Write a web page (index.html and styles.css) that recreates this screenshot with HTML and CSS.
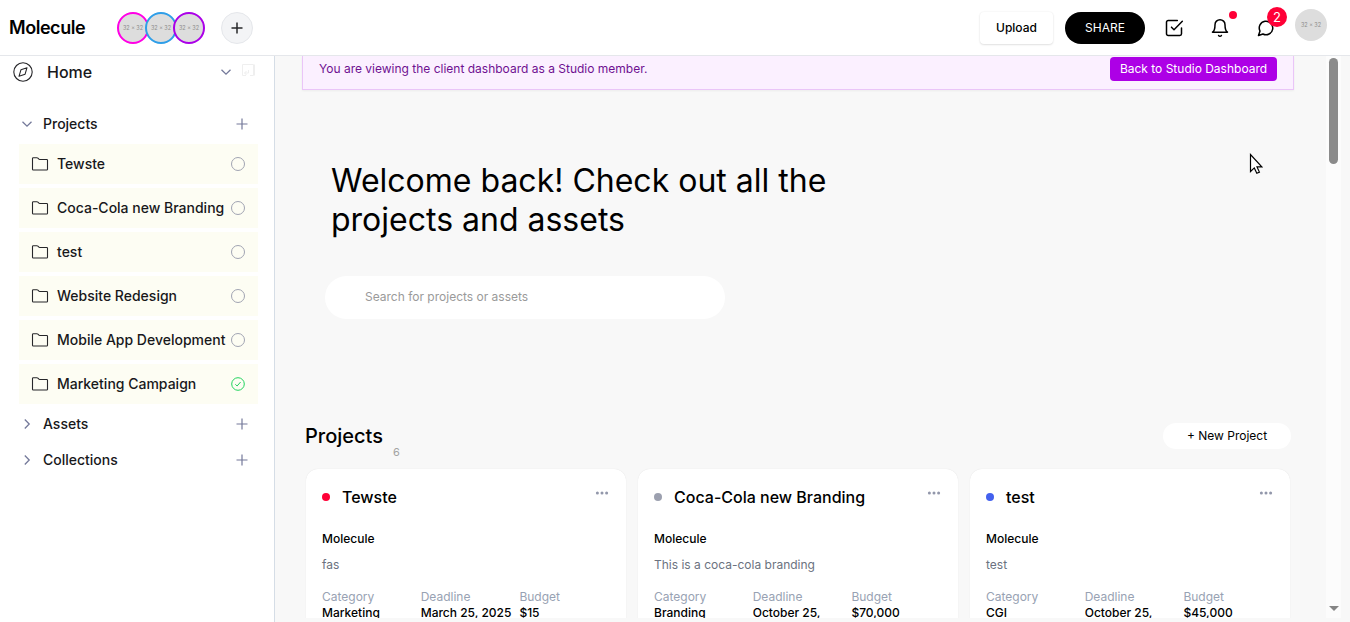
FILE: index.html
```html
<!DOCTYPE html>
<html lang="en">
<head>
<meta charset="utf-8">
<title>Molecule</title>
<link rel="stylesheet" href="styles.css">
</head>
<body>
<svg class="defs" width="0" height="0">
  <symbol id="folder" viewBox="0 0 18 16"><path d="M1.500 2.600c0-.5.300-.8.800-.8h3.600c.4 0 .7.100 1 .4l1 1c.2.2.4.3.7.3h7.100c.5 0 .8.300.8.800v8.900c0 .5-.3.800-.8.800H2.300c-.5 0-.8-.3-.8-.8z"/></symbol>
  <symbol id="plus" viewBox="0 0 16 16"><path d="M8 2.500v11M2.500 8h11"/></symbol>
  <symbol id="down" viewBox="0 0 16 16"><path d="M3.500 5.800 8 10.200l4.500-4.400"/></symbol>
  <symbol id="right" viewBox="0 0 16 16"><path d="M5.800 3.500 10.200 8l-4.400 4.500"/></symbol>
  <symbol id="dots" viewBox="0 0 14 4"><circle cx="2.400" cy="2" r="1.500"/><circle cx="7" cy="2" r="1.500"/><circle cx="11.600" cy="2" r="1.500"/></symbol>
</svg>
<header class="topbar">
  <div class="logo">Molecule</div>
  <div class="avatars">
    <span class="avatar pink">32 × 32</span><span class="avatar blue">32 × 32</span><span class="avatar purple">32 × 32</span>
  </div>
  <button class="add"><svg width="16" height="16"><use href="#plus"/></svg></button>
  <div class="actions">
    <button class="upload">Upload</button>
    <button class="share">SHARE</button>
    <span class="tool"><svg width="20" height="20" viewBox="0 0 24 24"><path d="m9 11 3 3L22 4"/><path d="M21 12v7a2 2 0 0 1-2 2H5a2 2 0 0 1-2-2V5a2 2 0 0 1 2-2h11"/></svg></span>
    <span class="tool"><svg width="20" height="20" viewBox="0 0 24 24"><path d="M6 8a6 6 0 0 1 12 0c0 7 3 9 3 9H3s3-2 3-9"/><path d="M10.300 21a1.940 1.940 0 0 0 3.400 0"/></svg><i class="ping"></i></span>
    <span class="tool chat"><svg width="18" height="18" viewBox="0 0 24 24"><path d="M7.900 20A9 9 0 1 0 4 16.100L2 22Z"/></svg><b class="badge">2</b></span>
    <span class="avatar me">32 × 32</span>
  </div>
</header>
<div class="shell">
  <aside class="sidebar">
    <div class="home">
      <svg class="compass" width="20" height="20" viewBox="0 0 20 20"><circle cx="10" cy="10" r="9.200"/><path d="M8 7.700 14 5.700l-1.900 6.500L6 14.300z"/></svg>
      <span>Home</span>
      <svg class="chev home-chev" width="16" height="16"><use href="#down"/></svg>
      <svg class="ghost" width="16" height="14" viewBox="0 0 16 14"><path d="M5 12.500H1.500v-11h11v11H9M13.500 1.500v11M7.500 7v3H3.500M5.500 8l-2 2 2 2"/></svg>
    </div>
    <div class="group"><svg class="chev" width="16" height="16"><use href="#down"/></svg><span>Projects</span><svg class="gplus" width="16" height="16"><use href="#plus"/></svg></div>
    <ul class="items">
      <li><svg class="folder" width="18" height="16"><use href="#folder"/></svg><span>Tewste</span><i class="ring"></i></li>
      <li><svg class="folder" width="18" height="16"><use href="#folder"/></svg><span>Coca-Cola new Branding</span><i class="ring"></i></li>
      <li><svg class="folder" width="18" height="16"><use href="#folder"/></svg><span>test</span><i class="ring"></i></li>
      <li><svg class="folder" width="18" height="16"><use href="#folder"/></svg><span>Website Redesign</span><i class="ring"></i></li>
      <li><svg class="folder" width="18" height="16"><use href="#folder"/></svg><span>Mobile App Development</span><i class="ring"></i></li>
      <li><svg class="folder" width="18" height="16"><use href="#folder"/></svg><span>Marketing Campaign</span><svg class="done" width="14" height="14" viewBox="0 0 14 14"><circle cx="7" cy="7" r="6.300"/><path d="m4.300 7.300 1.800 1.700 3.500-4"/></svg></li>
    </ul>
    <div class="group"><svg class="chev" width="16" height="16"><use href="#right"/></svg><span>Assets</span><svg class="gplus" width="16" height="16"><use href="#plus"/></svg></div>
    <div class="group"><svg class="chev" width="16" height="16"><use href="#right"/></svg><span>Collections</span><svg class="gplus" width="16" height="16"><use href="#plus"/></svg></div>
  </aside>
  <main class="main">
    <div class="banner"><span>You are viewing the client dashboard as a Studio member.</span><button>Back to Studio Dashboard</button></div>
    <h1>Welcome back! Check out all the<br>projects and assets</h1>
    <div class="search">Search for projects or assets</div>
    <div class="section-head"><h2>Projects</h2><span class="count">6</span><button>+ New Project</button></div>
    <div class="cards">
      <article class="card">
        <div class="card-head"><i class="dot red"></i><h3>Tewste</h3><svg class="more" width="14" height="4"><use href="#dots"/></svg></div>
        <p class="client">Molecule</p><p class="desc">fas</p>
        <dl><div><dt>Category</dt><dd>Marketing</dd></div><div><dt>Deadline</dt><dd>March 25, 2025</dd></div><div><dt>Budget</dt><dd>$15</dd></div></dl>
      </article>
      <article class="card">
        <div class="card-head"><i class="dot gray"></i><h3>Coca-Cola new Branding</h3><svg class="more" width="14" height="4"><use href="#dots"/></svg></div>
        <p class="client">Molecule</p><p class="desc">This is a coca-cola branding</p>
        <dl><div><dt>Category</dt><dd>Branding</dd></div><div><dt>Deadline</dt><dd>October 25,</dd></div><div><dt>Budget</dt><dd>$70,000</dd></div></dl>
      </article>
      <article class="card">
        <div class="card-head"><i class="dot indigo"></i><h3>test</h3><svg class="more" width="14" height="4"><use href="#dots"/></svg></div>
        <p class="client">Molecule</p><p class="desc">test</p>
        <dl><div><dt>Category</dt><dd>CGI</dd></div><div><dt>Deadline</dt><dd>October 25,</dd></div><div><dt>Budget</dt><dd>$45,000</dd></div></dl>
      </article>
    </div>
  </main>
  <div class="scrollbar"><i class="thumb"></i><i class="arrow"></i></div>
</div>
<svg class="cursor" width="14" height="22" viewBox="0 0 14 22"><path d="M1.500 1.500v17l3.800-3.600 2.500 5.400 2.600-1.200-2.400-5.200h4.800z"/></svg>
</body>
</html>
```
FILE: styles.css
```css
* { box-sizing: border-box; margin: 0; padding: 0; }
body { width: 1350px; height: 622px; overflow: hidden; background: #f8f8f8; font-family: Inter, sans-serif; color: #000; }
button { font: inherit; border: 0; white-space: nowrap; }
svg { fill: none; flex: none; display: block; }
i { display: block; flex: none; }
.defs { position: absolute; }

.topbar { height: 56px; background: #fff; border-bottom: 1px solid #e5e7eb; display: flex; align-items: center; padding: 0 23px 0 9px; }
.logo { width: 108px; font-size: 18px; font-weight: 600; letter-spacing: -0.45px; }
.avatars { display: flex; }
.avatar { width: 32px; height: 32px; border-radius: 50%; background: #ddd; color: #8c8c8c; font-size: 5.500px; display: flex; align-items: center; justify-content: center; border: 2px solid; white-space: nowrap; }
.avatars .avatar + .avatar { margin-left: -4px; }
.avatars .pink { border-color: #ff00e5; }
.avatars .blue { border-color: #2f9ee8; }
.avatars .purple { border-color: #ab00e8; }
.me { border: 0; margin: -6px 0 0 6px; }
.add { width: 32px; height: 32px; margin-left: 16px; border-radius: 50%; background: #f3f4f6; border: 1px solid #e5e7eb; display: flex; align-items: center; justify-content: center; stroke: #27272a; stroke-width: 1.500; }
.actions { margin-left: auto; display: flex; align-items: center; }
.upload { width: 73px; height: 32px; background: #fff; border-radius: 4px; font-size: 12px; font-weight: 500; box-shadow: 0 0 2px rgba(0,0,0,.08), 0 1px 2px rgba(0,0,0,.1); }
.share { width: 80px; height: 32px; margin: 0 6px 0 12px; border-radius: 16px; background: #000; color: #fff; font-size: 12px; }
.tool { position: relative; width: 46px; height: 20px; display: flex; align-items: center; justify-content: center; stroke: #000; stroke-width: 1.800; stroke-linecap: round; stroke-linejoin: round; }
.chat { stroke-width: 2; }
.ping { position: absolute; left: 32px; top: -7px; width: 8px; height: 8px; border-radius: 50%; background: #ff0037; }
.badge { position: absolute; left: 24px; top: -11px; width: 20px; height: 20px; border-radius: 50%; background: #ff0037; color: #fff; font-size: 13px; font-weight: 400; line-height: 20px; text-align: center; }

.shell { display: flex; height: 562px; }
.sidebar { width: 275px; height: 566px; flex: none; background: #fff; border-right: 1px solid #d5dde6; color: #18181b; font-weight: 500; font-size: 14px; }
.home { height: 32px; display: flex; align-items: center; padding: 0 17px 0 13px; margin-bottom: 18px; }
.home span { margin-left: 14px; font-size: 16px; }
.compass { stroke: #27272a; stroke-width: 1.100; stroke-linejoin: round; }
.chev { stroke: #74799a; stroke-width: 1.300; }
.home-chev { margin-left: auto; }
.ghost { margin: -4px 0 0 7px; stroke: #efefef; }
.group { height: 36px; display: flex; align-items: center; padding: 0 24px 0 19px; }
.group span { margin: -2px 0 0 8px; }
.gplus { margin-left: auto; stroke: #74799a; stroke-width: 1.200; }
.items { list-style: none; display: grid; gap: 4px; margin: 2px 16px 2px 19px; }
.items li { height: 40px; background: #fdfdf3; display: flex; align-items: center; padding: 0 13px 0 12px; white-space: nowrap; }
.items span { margin: -2px 0 0 8px; flex: 1; width: 0; }
.folder { stroke: #27272a; stroke-width: 1.100; }
.ring { width: 14px; height: 14px; border: 1px solid #a1a4b2; border-radius: 50%; }
.done { stroke: #22d35e; }

.main { flex: 1; overflow: hidden; padding: 0 32px 0 27px; }
.banner { height: 34px; border: 1px solid #eac5f8; border-top: 0; background: #fbf0ff; color: #6f1191; font-size: 12px; display: flex; justify-content: space-between; align-items: flex-start; padding: 1px 16px 0; box-shadow: 0 1px 2px rgba(0,0,0,.05); }
.banner span { line-height: 24px; }
.banner button { width: 167px; height: 24px; padding-bottom: 1px; border-radius: 4px; background: #ad00e6; color: #fff; }
h1 { margin: 71px 0 0 29px; font-size: 32px; line-height: 39px; font-weight: 400; white-space: nowrap; }
.search { width: 400px; height: 43px; margin: 37px 0 0 23px; border-radius: 22px; background: #fff; color: #9a9a9a; font-size: 12px; line-height: 42px; padding-left: 40px; }
.section-head { height: 26px; margin: 104px 3px 20px; display: flex; align-items: center; }
h2 { font-size: 20px; font-weight: 500; }
.count { margin: 31px 0 0 10px; font-size: 11px; color: #a3a3a3; }
.section-head button { margin-left: auto; width: 128px; height: 26px; padding-bottom: 2px; border-radius: 13px; background: #fff; font-size: 12px; }
.cards { display: grid; grid-template-columns: repeat(3, 320px); gap: 12px; margin-left: 4px; }
.card { height: 240px; background: #fff; border-radius: 12px; padding: 16px; box-shadow: 0 0 1px rgba(0,0,0,.12); }
.card-head { display: flex; height: 24px; align-items: center; }
.dot { width: 8px; height: 8px; border-radius: 50%; }
.red { background: #ff0037; }
.gray { background: #9ca0af; }
.indigo { background: #4361ee; }
h3 { margin-left: 12px; font-size: 16px; font-weight: 500; }
.more { margin: -8px 1px 0 auto; fill: #9297aa; }
.client { margin-top: 22px; font-size: 12px; line-height: 16px; font-weight: 500; }
.desc { margin-top: 10px; font-size: 12px; line-height: 16px; color: #6b7280; }
dl { display: grid; grid-template-columns: repeat(3, 98.700px); margin-top: 16px; font-size: 12px; line-height: 16px; white-space: nowrap; }
dt { color: #98a2b3; }
dd { font-weight: 500; }

.scrollbar { width: 15px; margin-right: 9px; background: #fcfcfc; display: flex; flex-direction: column; align-items: center; padding: 2px 0 7px; }
.thumb { width: 9px; height: 106px; border-radius: 5px; background: #8b8b8b; }
.arrow { margin-top: auto; border: 5px solid transparent; border-top-color: #858585; border-bottom: 0; }
.cursor { position: absolute; left: 1249px; top: 153px; fill: #fff; stroke: #000; stroke-width: 1.200; }
```
